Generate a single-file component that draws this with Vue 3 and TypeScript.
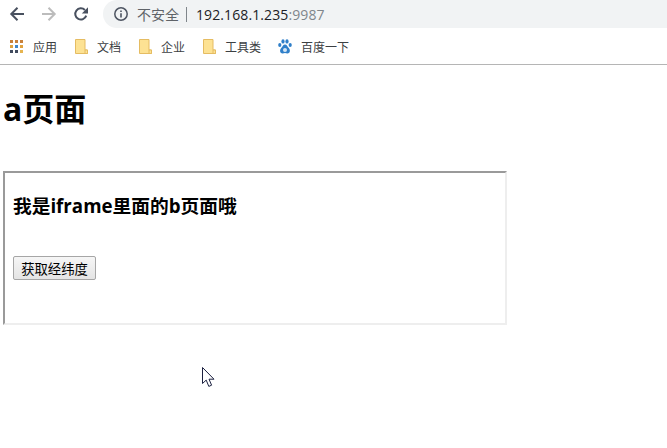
<script setup lang="ts">
const bookmarks = ['文档', '企业', '工具类']
const appColors = ['#c8813b', '#c8813b', '#c8813b', '#e0a23f', '#3f86c9', '#e0a23f', '#3f4a5e', '#3f4a5e', '#e6b450']
</script>

<template>
  <div class="page">
    <div class="toolbar">
      <div class="nav">
        <svg class="ic" width="16" height="16" viewBox="0 0 16 16"><path d="M15 8H2.500M8.500 1.800 2.300 8l6.200 6.200" fill="none" stroke="#48505f" stroke-width="2"/></svg>
        <svg class="ic" width="16" height="16" viewBox="0 0 16 16"><path d="M1 8h12.500M7.500 1.800 13.700 8l-6.200 6.200" fill="none" stroke="#bcbcbc" stroke-width="2"/></svg>
        <svg class="ic" width="16" height="16" viewBox="0 0 16 16"><path d="M13.200 9.600A5.600 5.600 0 1 1 11.900 4" fill="none" stroke="#48505f" stroke-width="2"/><path d="M15 1.200v6.200H8.800z" fill="#48505f"/></svg>
      </div>
      <div class="omnibox">
        <svg width="16" height="16" viewBox="0 0 16 16"><circle cx="8" cy="8" r="6.200" fill="none" stroke="#4d5461" stroke-width="1.500"/><path d="M8 7.200v4.200M8 4.400v1.600" stroke="#4d5461" stroke-width="1.600"/></svg>
        <span class="insecure">不安全</span>
        <span class="sep"></span>
        <span class="host">192.168.1.235<span class="port">:9987</span></span>
      </div>
    </div>

    <div class="bookmarks">
      <div class="bm apps">
        <span class="grid"><i v-for="(c, i) in appColors" :key="i" :style="{ background: c }"></i></span>
        <span>应用</span>
      </div>
      <div v-for="b in bookmarks" :key="b" class="bm folder-item">
        <svg width="13" height="15" viewBox="0 0 13 15"><path d="M.5.500h9.500v10.500h2.500v3.500H.5z" fill="#fde293" stroke="#e5bc62"/><path d="M10 11h2.500v3.500H10z" fill="#fde293" stroke="#e5bc62"/></svg>
        <span>{{ b }}</span>
      </div>
      <div class="bm baidu">
        <svg width="14" height="15" viewBox="0 0 14 15"><g fill="#2f7fc9"><ellipse cx="1.800" cy="6" rx="1.600" ry="2.100"/><ellipse cx="5" cy="2.400" rx="1.600" ry="2.200"/><ellipse cx="9" cy="2.400" rx="1.600" ry="2.200"/><ellipse cx="12.200" cy="6" rx="1.600" ry="2.100"/><path d="M7 5.500c-2 0-2.400 2.200-3.800 3.500C1.600 10.500 1.500 14.500 4.600 14.500c1 0 1.600-.4 2.400-.4s1.400.4 2.400.4c3.100 0 3-4 1.400-5.500C9.400 7.700 9 5.500 7 5.500z"/></g><circle cx="7" cy="11" r="2" fill="#fff" fill-opacity=".8"/></svg>
        <span>百度一下</span>
      </div>
    </div>

    <main class="content">
      <h1>a页面</h1>
      <div class="frame">
        <h3>我是iframe里面的b页面哦</h3>
        <button type="button">获取经纬度</button>
      </div>
    </main>

    <svg class="cursor" width="15" height="21" viewBox="0 0 15 21"><path d="M.5.500v16l3.700-3.400 2.600 6.300 2.800-1.200-2.600-6h5z" fill="#fff" stroke="#1c2140" stroke-width="1"/></svg>
  </div>
</template>

<style>
html, body { margin: 0; background: #fff; }
</style>

<style scoped>
.page {
  position: relative;
  width: 667px;
  height: 448px;
  overflow: hidden;
  background: #fff;
  font-family: "Liberation Sans", "Noto Sans CJK SC", sans-serif;
  color: #000;
}
.toolbar {
  display: flex;
  height: 35px;
}
.nav {
  width: 103px;
  display: flex;
  gap: 16px;
  padding: 6px 0 0 9px;
  box-sizing: border-box;
}
.ic { flex: none; }
.omnibox {
  flex: 1;
  height: 28px;
  background: #f1f3f4;
  border-radius: 14px 0 0 14px;
  display: flex;
  align-items: center;
  padding-left: 10px;
}
.insecure { margin-left: 8px; color: #5f6368; font-size: 14px; }
.sep { width: 1px; height: 15px; background: #80868b; margin: 0 9px 0 7px; }
.host { font-size: 14px; letter-spacing: 0.1px; color: #202124; font-family: "Open Sans", "Liberation Sans", sans-serif; }
.port { color: #80868b; }
.bookmarks {
  height: 30px;
  box-sizing: border-box;
  border-bottom: 1px solid #b5b5b5;
  display: flex;
  align-items: center;
  padding: 0 0 7px 10px;
  font-size: 12px;
  color: #3c4043;
}
.bm { display: flex; align-items: center; }
.apps { gap: 10px; margin-right: 18px; }
.folder-item { gap: 9px; margin-right: 18px; }
.folder-item:nth-of-type(4) { margin-right: 17px; }
.baidu { gap: 9px; }
.grid {
  display: grid;
  grid-template-columns: repeat(3, 3px);
  grid-auto-rows: 3px;
  gap: 2px;
}
.grid i { display: block; }
.content { padding-left: 3px; }
h1 {
  margin: 0;
  padding-top: 25px;
  height: 80px;
  box-sizing: border-box;
  font-family: "Open Sans", "Noto Sans CJK SC", sans-serif;
  font-size: 32px;
  line-height: 37px;
  font-weight: 700;
}
.frame {
  width: 504px;
  height: 154px;
  margin-top: 26px;
  box-sizing: border-box;
  border: 2px solid;
  border-color: #9a9a9a #eeeeee #eeeeee #9a9a9a;
  padding: 0 8px;
}
h3 {
  margin: 0;
  padding-top: 22px;
  font-family: "Open Sans", "Noto Sans CJK SC", sans-serif;
  font-size: 18.72px;
  line-height: 22px;
  font-weight: 700;
}
button {
  display: block;
  margin-top: 39px;
  width: 83px;
  height: 24px;
  padding: 0;
  box-sizing: border-box;
  font: 13.33px "Liberation Sans", "Noto Sans CJK SC", sans-serif;
  color: #000;
  background: linear-gradient(#f6f6f6, #e4e4e4);
  border: 1px solid #a6a6a6;
  border-radius: 2px;
}
.cursor { position: absolute; left: 202px; top: 367px; }
</style>
